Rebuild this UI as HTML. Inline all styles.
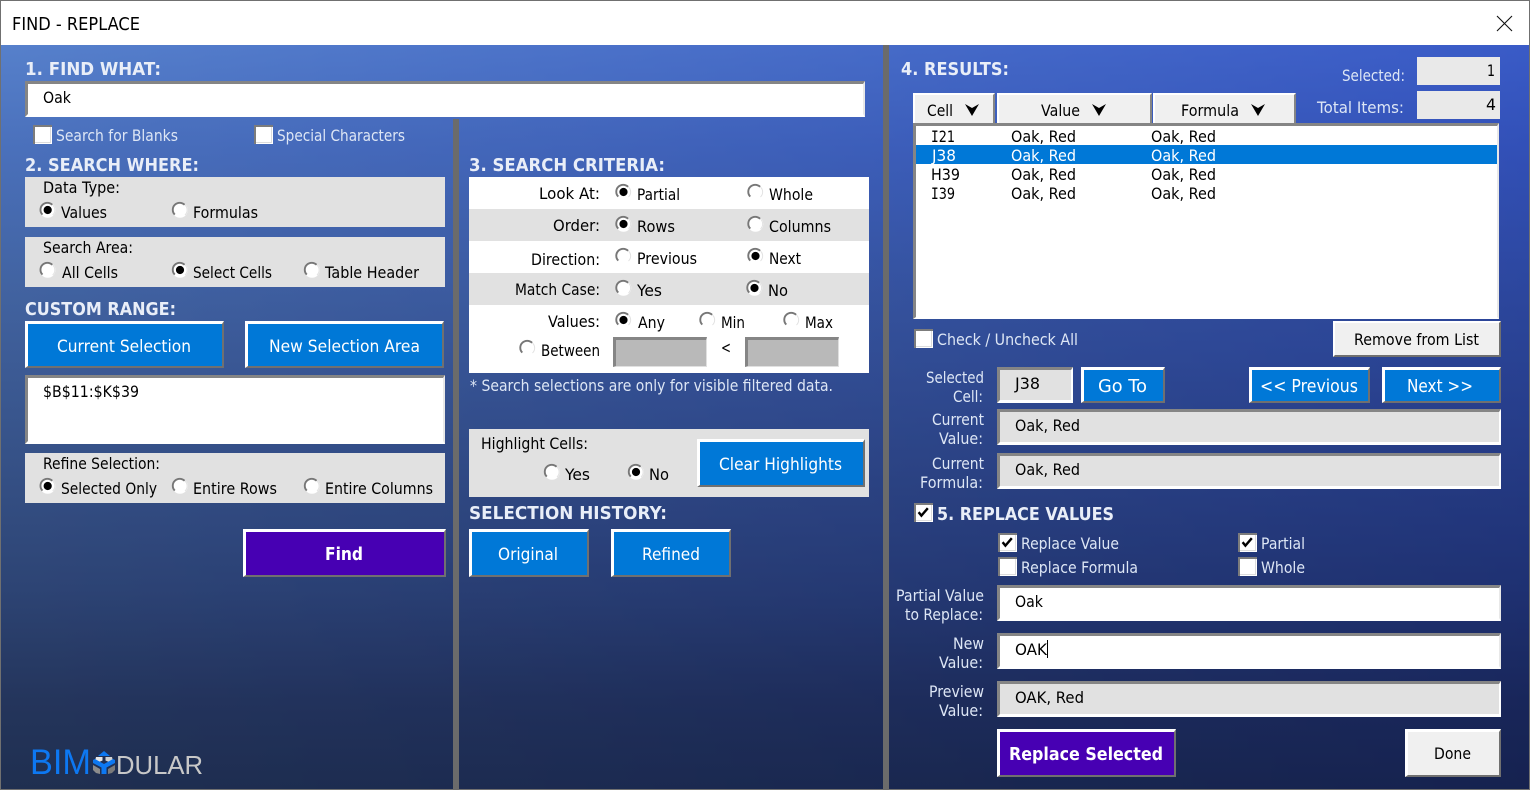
<!DOCTYPE html>
<html><head><meta charset="utf-8"><title>FIND - REPLACE</title>
<style>
html,body{margin:0;padding:0;width:1530px;height:790px;overflow:hidden;background:#fff}
#w{position:absolute;left:0;top:0;width:1530px;height:790px;overflow:hidden}
#w div{position:absolute;box-sizing:border-box}
.bg{left:0;top:45px;width:1530px;height:745px;background:linear-gradient(180deg,#5680cb 0,#4a70bb 14%,#41629f 34%,#2d4474 73%,#24355c 88%,#1f2f50 100%)}
.ov{left:0;top:45px;width:1530px;height:745px;background:linear-gradient(90deg,#fff 0,#aab5fa 100%);mix-blend-mode:multiply}
.sep{background:#6b6b6b}
.g{background:#e1e1e1}
.wh{background:#fff}
.b{background:#0078d7;border-style:solid;border-width:3px 2px 2px 3px;border-color:#fff #707070 #707070 #fff}
.p{background:#4700b3;border-style:solid;border-width:3px 2px 2px 3px;border-color:#fff #707070 #707070 #fff}
.l{background:#f0f0f0;border-style:solid;border-width:2px 2px 2px 2px;border-color:#fff #707070 #707070 #fff}
.i{background:#fff;border-style:solid;border-width:3px 2px 3px 3px;border-color:#858585 #e8e8e8 #fff #858585}
.ig{background:#e1e1e1;border-style:solid;border-width:3px 2px 3px 3px;border-color:#858585 #fff #fff #858585}
.id{background:#b9b9b9;border-style:solid;border-width:3px 1px 1px 3px;border-color:#858585 #e0e0e0 #e0e0e0 #858585}
.h{background:#f0f0f0;border-style:solid;border-width:2px 2px 0 2px;border-color:#fff #858585 #858585 #fff}
svg{position:absolute;left:0;top:0}
text{font-family:"DejaVu Sans","Liberation Sans",sans-serif;font-size:16px;fill:#000}
.c{fill:#dde6f5}
.w{fill:#fff}
.hd{font-weight:bold;font-size:18px;fill:#e9eef8}
.bw{font-weight:bold;font-size:18px;fill:#fff}
.m{font-family:"DejaVu Sans Mono","Liberation Mono",monospace}
</style></head><body><div id="w">
<div class="bg"></div><div class="ov"></div>
<div style="left:0;top:0;width:1530px;height:1px;background:#707070"></div>
<div style="left:0;top:0;width:1px;height:790px;background:#707070"></div>
<div style="left:1529px;top:0;width:1px;height:790px;background:#707070"></div>
<div style="left:0;top:789px;width:1530px;height:1px;background:#707070"></div>
<div class="sep" style="left:453px;top:119px;width:6px;height:671px"></div>
<div class="sep" style="left:883px;top:45px;width:6px;height:745px"></div>

<div class="i" style="left:25px;top:81px;width:840px;height:36px"></div>
<div class="g" style="left:25px;top:177px;width:420px;height:50px"></div>
<div class="g" style="left:25px;top:237px;width:420px;height:50px"></div>
<div class="b" style="left:25px;top:321px;width:199px;height:47px"></div>
<div class="b" style="left:245px;top:321px;width:199px;height:47px"></div>
<div class="i" style="left:25px;top:375px;width:420px;height:69px"></div>
<div class="g" style="left:25px;top:453px;width:420px;height:50px"></div>
<div class="p" style="left:243px;top:529px;width:203px;height:48px"></div>

<div class="wh" style="left:469px;top:177px;width:400px;height:196px"></div>
<div class="g" style="left:469px;top:209px;width:400px;height:32px"></div>
<div class="g" style="left:469px;top:273px;width:400px;height:32px"></div>
<div class="id" style="left:613px;top:337px;width:94px;height:30px"></div>
<div class="id" style="left:745px;top:337px;width:94px;height:30px"></div>
<div class="g" style="left:469px;top:429px;width:400px;height:68px"></div>
<div class="b" style="left:697px;top:439px;width:168px;height:48px"></div>
<div class="b" style="left:469px;top:529px;width:120px;height:48px"></div>
<div class="b" style="left:611px;top:529px;width:120px;height:48px"></div>

<div style="left:1417px;top:57px;width:83px;height:28px;background:#e9e9e9"></div>
<div style="left:1417px;top:91px;width:83px;height:28px;background:#e9e9e9"></div>
<div class="h" style="left:913px;top:93px;width:82px;height:30px"></div>
<div class="h" style="left:997px;top:93px;width:155px;height:30px"></div>
<div class="h" style="left:1153px;top:93px;width:143px;height:30px"></div>
<div class="i" style="left:913px;top:123px;width:586px;height:196px;border-width:3px 2px 2px 3px;border-color:#858585 #e8e8e8 #fff #858585"></div>
<div style="left:916px;top:145px;width:581px;height:19px;background:#0078d7"></div>
<div class="l" style="left:1333px;top:321px;width:168px;height:36px"></div>
<div class="ig" style="left:997px;top:367px;width:76px;height:36px"></div>
<div class="b" style="left:1081px;top:367px;width:84px;height:36px"></div>
<div class="b" style="left:1249px;top:367px;width:121px;height:36px"></div>
<div class="b" style="left:1382px;top:367px;width:119px;height:36px"></div>
<div class="ig" style="left:997px;top:409px;width:504px;height:36px"></div>
<div class="ig" style="left:997px;top:453px;width:504px;height:36px"></div>
<div class="i" style="left:997px;top:585px;width:504px;height:36px"></div>
<div class="i" style="left:997px;top:633px;width:504px;height:36px"></div>
<div class="ig" style="left:997px;top:681px;width:504px;height:36px"></div>
<div class="p" style="left:997px;top:729px;width:179px;height:48px"></div>
<div class="l" style="left:1405px;top:729px;width:96px;height:48px;border-width:3px 2px 2px 3px"></div>

<svg width="1530" height="790" viewBox="0 0 1530 790">
<defs>
<g id="r"><circle r="7.8" fill="#fff"/><path d="M5 5A6.9 6.9 0 0 0 5 -5" fill="none" stroke="#e2e2e2" stroke-width="1" transform="rotate(0)"/><path d="M-5.2 4.6A6.9 6.9 0 0 1 4.6 -5.2" fill="none" stroke="#777" stroke-width="1.9"/></g>
<g id="rs"><use href="#r"/><circle r="4.1" fill="#000"/></g>
<g id="k"><rect width="19" height="19" fill="#fff"/><path d="M1 19V1H19" fill="none" stroke="#7c7c7c" stroke-width="2"/><path d="M2 17.5H17.5V2" fill="none" stroke="#dcdcdc"/></g>
<g id="kc"><use href="#k"/><path d="M4.6 9.2L7.4 12.6L13.8 5.2" fill="none" stroke="#000" stroke-width="2.4"/></g>
<path id="a" d="M-7 -6L0 -2L7 -6L0 6z" fill="#000"/>
</defs>

<text x="12" y="30" style="font-size:18px" textLength="128" lengthAdjust="spacingAndGlyphs">FIND - REPLACE</text>
<path d="M1497 16L1512 31M1512 16L1497 31" stroke="#111" stroke-width="1.1" fill="none"/>

<text class="hd" x="25" y="75" textLength="136" lengthAdjust="spacingAndGlyphs">1. FIND WHAT:</text>
<text x="43" y="103" textLength="28" lengthAdjust="spacingAndGlyphs">Oak</text>
<use href="#k" x="33" y="125"/><use href="#k" x="254" y="125"/>
<text class="c" x="56" y="141" textLength="122" lengthAdjust="spacingAndGlyphs">Search for Blanks</text>
<text class="c" x="277" y="141" textLength="128" lengthAdjust="spacingAndGlyphs">Special Characters</text>
<text class="hd" x="25" y="171" textLength="174" lengthAdjust="spacingAndGlyphs">2. SEARCH WHERE:</text>
<text x="43" y="193" textLength="77" lengthAdjust="spacingAndGlyphs">Data Type:</text>
<use href="#rs" x="47.7" y="210"/><use href="#r" x="180" y="210"/>
<text x="61" y="218" textLength="46" lengthAdjust="spacingAndGlyphs">Values</text>
<text x="193" y="218" textLength="65" lengthAdjust="spacingAndGlyphs">Formulas</text>
<text x="43" y="253" textLength="90" lengthAdjust="spacingAndGlyphs">Search Area:</text>
<use href="#r" x="47.7" y="270"/><use href="#rs" x="180" y="270"/><use href="#r" x="312" y="270"/>
<text x="62" y="278" textLength="56" lengthAdjust="spacingAndGlyphs">All Cells</text>
<text x="193" y="278" textLength="79" lengthAdjust="spacingAndGlyphs">Select Cells</text>
<text x="325" y="278" textLength="94" lengthAdjust="spacingAndGlyphs">Table Header</text>
<text class="hd" x="25" y="315" textLength="151" lengthAdjust="spacingAndGlyphs">CUSTOM RANGE:</text>
<text class="w" x="57" y="352" style="font-size:17px" textLength="134" lengthAdjust="spacingAndGlyphs">Current Selection</text>
<text class="w" x="269" y="352" style="font-size:17px" textLength="151" lengthAdjust="spacingAndGlyphs">New Selection Area</text>
<text x="43" y="397" textLength="96" lengthAdjust="spacingAndGlyphs">$B$11:$K$39</text>
<text x="43" y="469" textLength="117" lengthAdjust="spacingAndGlyphs">Refine Selection:</text>
<use href="#rs" x="47.7" y="486"/><use href="#r" x="180" y="486"/><use href="#r" x="312" y="486"/>
<text x="61" y="494" textLength="96" lengthAdjust="spacingAndGlyphs">Selected Only</text>
<text x="193" y="494" textLength="84" lengthAdjust="spacingAndGlyphs">Entire Rows</text>
<text x="325" y="494" textLength="108" lengthAdjust="spacingAndGlyphs">Entire Columns</text>
<text class="bw" x="325" y="560" textLength="38" lengthAdjust="spacingAndGlyphs">Find</text>

<text class="hd" x="469" y="171" textLength="196" lengthAdjust="spacingAndGlyphs">3. SEARCH CRITERIA:</text>
<text x="539" y="199" textLength="61" lengthAdjust="spacingAndGlyphs">Look At:</text>
<use href="#rs" x="623.5" y="192"/><use href="#r" x="755.5" y="192"/>
<text x="637" y="200" textLength="43" lengthAdjust="spacingAndGlyphs">Partial</text>
<text x="769" y="200" textLength="44" lengthAdjust="spacingAndGlyphs">Whole</text>
<text x="553" y="231" textLength="47" lengthAdjust="spacingAndGlyphs">Order:</text>
<use href="#rs" x="623.5" y="224"/><use href="#r" x="755.5" y="224"/>
<text x="637" y="232" textLength="38" lengthAdjust="spacingAndGlyphs">Rows</text>
<text x="769" y="232" textLength="62" lengthAdjust="spacingAndGlyphs">Columns</text>
<text x="531" y="265" textLength="69" lengthAdjust="spacingAndGlyphs">Direction:</text>
<use href="#r" x="623.5" y="256"/><use href="#rs" x="755.5" y="256"/>
<text x="637" y="264" textLength="60" lengthAdjust="spacingAndGlyphs">Previous</text>
<text x="769" y="264" textLength="32" lengthAdjust="spacingAndGlyphs">Next</text>
<text x="515" y="295" textLength="85" lengthAdjust="spacingAndGlyphs">Match Case:</text>
<use href="#r" x="623.5" y="288"/><use href="#rs" x="754.5" y="288"/>
<text x="637" y="296" textLength="25" lengthAdjust="spacingAndGlyphs">Yes</text>
<text x="768" y="296" textLength="20" lengthAdjust="spacingAndGlyphs">No</text>
<text x="548" y="327" textLength="52" lengthAdjust="spacingAndGlyphs">Values:</text>
<use href="#rs" x="623.5" y="320"/><use href="#r" x="707.5" y="320"/><use href="#r" x="791.5" y="320"/>
<text x="638" y="328" textLength="27" lengthAdjust="spacingAndGlyphs">Any</text>
<text x="721" y="328" textLength="24" lengthAdjust="spacingAndGlyphs">Min</text>
<text x="805" y="328" textLength="28" lengthAdjust="spacingAndGlyphs">Max</text>
<use href="#r" x="527.5" y="348"/>
<text x="541" y="356" textLength="59" lengthAdjust="spacingAndGlyphs">Between</text>
<text x="721" y="353" textLength="10" lengthAdjust="spacingAndGlyphs">&lt;</text>
<text class="c" x="470" y="391" textLength="363" lengthAdjust="spacingAndGlyphs">* Search selections are only for visible filtered data.</text>
<text x="481" y="449" textLength="107" lengthAdjust="spacingAndGlyphs">Highlight Cells:</text>
<use href="#r" x="552" y="472"/><use href="#rs" x="636" y="472"/>
<text x="565" y="480" textLength="25" lengthAdjust="spacingAndGlyphs">Yes</text>
<text x="649" y="480" textLength="20" lengthAdjust="spacingAndGlyphs">No</text>
<text class="w" x="719" y="470" style="font-size:17px" textLength="123" lengthAdjust="spacingAndGlyphs">Clear Highlights</text>
<text class="hd" x="469" y="519" textLength="198" lengthAdjust="spacingAndGlyphs">SELECTION HISTORY:</text>
<text class="w" x="498" y="560" style="font-size:17px" textLength="60" lengthAdjust="spacingAndGlyphs">Original</text>
<text class="w" x="642" y="560" style="font-size:17px" textLength="58" lengthAdjust="spacingAndGlyphs">Refined</text>

<text class="hd" x="901" y="75" textLength="108" lengthAdjust="spacingAndGlyphs">4. RESULTS:</text>
<text class="c" x="1342" y="81" textLength="63" lengthAdjust="spacingAndGlyphs">Selected:</text>
<text x="1487" y="76" textLength="8" lengthAdjust="spacingAndGlyphs">1</text>
<text class="c" x="1317" y="113" textLength="87" lengthAdjust="spacingAndGlyphs">Total Items:</text>
<text x="1486" y="110" textLength="10" lengthAdjust="spacingAndGlyphs">4</text>
<text x="927" y="116" textLength="26" lengthAdjust="spacingAndGlyphs">Cell</text>
<text x="1041" y="116" textLength="39" lengthAdjust="spacingAndGlyphs">Value</text>
<text x="1181" y="116" textLength="58" lengthAdjust="spacingAndGlyphs">Formula</text>
<use href="#a" x="972" y="110"/><use href="#a" x="1099" y="110"/><use href="#a" x="1258" y="110"/>

<text x="931" y="142" textLength="24" lengthAdjust="spacingAndGlyphs"><tspan class="m">I</tspan>21</text>
<text x="1011" y="142" textLength="65" lengthAdjust="spacingAndGlyphs">Oak, Red</text>
<text x="1151" y="142" textLength="65" lengthAdjust="spacingAndGlyphs">Oak, Red</text>
<text class="w" x="932" y="161" textLength="24" lengthAdjust="spacingAndGlyphs">J38</text>
<text class="w" x="1011" y="161" textLength="65" lengthAdjust="spacingAndGlyphs">Oak, Red</text>
<text class="w" x="1151" y="161" textLength="65" lengthAdjust="spacingAndGlyphs">Oak, Red</text>
<text x="931" y="180" textLength="29" lengthAdjust="spacingAndGlyphs">H39</text>
<text x="1011" y="180" textLength="65" lengthAdjust="spacingAndGlyphs">Oak, Red</text>
<text x="1151" y="180" textLength="65" lengthAdjust="spacingAndGlyphs">Oak, Red</text>
<text x="931" y="199" textLength="24" lengthAdjust="spacingAndGlyphs"><tspan class="m">I</tspan>39</text>
<text x="1011" y="199" textLength="65" lengthAdjust="spacingAndGlyphs">Oak, Red</text>
<text x="1151" y="199" textLength="65" lengthAdjust="spacingAndGlyphs">Oak, Red</text>

<use href="#k" x="914" y="329"/>
<text class="c" x="937" y="345" textLength="141" lengthAdjust="spacingAndGlyphs">Check / Uncheck All</text>
<text x="1354" y="345" textLength="125" lengthAdjust="spacingAndGlyphs">Remove from List</text>
<text class="c" x="926" y="383" textLength="58" lengthAdjust="spacingAndGlyphs">Selected</text>
<text class="c" x="953" y="402" textLength="30" lengthAdjust="spacingAndGlyphs">Cell:</text>
<text x="1015" y="389" textLength="25" lengthAdjust="spacingAndGlyphs">J38</text>
<text class="w" x="1098" y="392" style="font-size:18px" textLength="49" lengthAdjust="spacingAndGlyphs">Go To</text>
<text class="w" x="1260" y="392" style="font-size:18px" textLength="98" lengthAdjust="spacingAndGlyphs">&lt;&lt; Previous</text>
<text class="w" x="1407" y="392" style="font-size:18px" textLength="66" lengthAdjust="spacingAndGlyphs">Next &gt;&gt;</text>
<text class="c" x="932" y="425" textLength="52" lengthAdjust="spacingAndGlyphs">Current</text>
<text class="c" x="939" y="444" textLength="44" lengthAdjust="spacingAndGlyphs">Value:</text>
<text x="1015" y="431" textLength="65" lengthAdjust="spacingAndGlyphs">Oak, Red</text>
<text class="c" x="932" y="469" textLength="52" lengthAdjust="spacingAndGlyphs">Current</text>
<text class="c" x="920" y="488" textLength="63" lengthAdjust="spacingAndGlyphs">Formula:</text>
<text x="1015" y="475" textLength="65" lengthAdjust="spacingAndGlyphs">Oak, Red</text>

<use href="#kc" x="914" y="503"/>
<text class="hd" x="937" y="520" textLength="177" lengthAdjust="spacingAndGlyphs">5. REPLACE VALUES</text>
<use href="#kc" x="998" y="533"/><use href="#kc" x="1238" y="533"/>
<use href="#k" x="998" y="557"/><use href="#k" x="1238" y="557"/>
<text class="c" x="1021" y="549" textLength="98" lengthAdjust="spacingAndGlyphs">Replace Value</text>
<text class="c" x="1261" y="549" textLength="44" lengthAdjust="spacingAndGlyphs">Partial</text>
<text class="c" x="1021" y="573" textLength="117" lengthAdjust="spacingAndGlyphs">Replace Formula</text>
<text class="c" x="1261" y="573" textLength="44" lengthAdjust="spacingAndGlyphs">Whole</text>
<text class="c" x="896" y="601" textLength="88" lengthAdjust="spacingAndGlyphs">Partial Value</text>
<text class="c" x="905" y="620" textLength="78" lengthAdjust="spacingAndGlyphs">to Replace:</text>
<text x="1015" y="607" textLength="28" lengthAdjust="spacingAndGlyphs">Oak</text>
<text class="c" x="953" y="649" textLength="31" lengthAdjust="spacingAndGlyphs">New</text>
<text class="c" x="939" y="668" textLength="44" lengthAdjust="spacingAndGlyphs">Value:</text>
<text x="1015" y="655" textLength="32" lengthAdjust="spacingAndGlyphs">OAK</text>
<rect x="1047" y="640" width="1" height="18" fill="#000"/>
<text class="c" x="929" y="697" textLength="55" lengthAdjust="spacingAndGlyphs">Preview</text>
<text class="c" x="939" y="716" textLength="44" lengthAdjust="spacingAndGlyphs">Value:</text>
<text x="1015" y="703" textLength="69" lengthAdjust="spacingAndGlyphs">OAK, Red</text>
<text class="bw" x="1009" y="760" textLength="154" lengthAdjust="spacingAndGlyphs">Replace Selected</text>
<text x="1434" y="759" textLength="37" lengthAdjust="spacingAndGlyphs">Done</text>

<text x="30" y="774" style="font-family:'Liberation Sans',sans-serif;font-size:35px;fill:#0d78f2" textLength="61" lengthAdjust="spacingAndGlyphs">BIM</text>
<text x="116" y="774" style="font-family:'Liberation Sans',sans-serif;font-size:26px;fill:#c8c8c8" textLength="87" lengthAdjust="spacingAndGlyphs">DULAR</text>
<g transform="translate(104 763)">
<path d="M0 -12L6 -7L-6 -7z" fill="#0d78f2"/>
<path d="M-8 -6L-1.5 -6L-1.5 -2.5L-6 -0.5L-9 -2z" fill="#e6e6e6"/><path d="M8 -6L1.5 -6L1.5 -2.5L6 -0.5L9 -2z" fill="#d0d0d0"/>
<path d="M-11 -3L-9 -4L0 1L9 -4L11 -3L11 0L2.5 4.5L2.5 11L-2.5 11L-2.5 4.5L-11 0z" fill="#0d78f2"/>
<path d="M-11 2L-4 6L-4 11L-8 10L-11 7z" fill="#8c8c8c"/><path d="M11 2L4 6L4 11L8 10L11 7z" fill="#7a7a7a"/>
</g>
</svg>
</div></body></html>
